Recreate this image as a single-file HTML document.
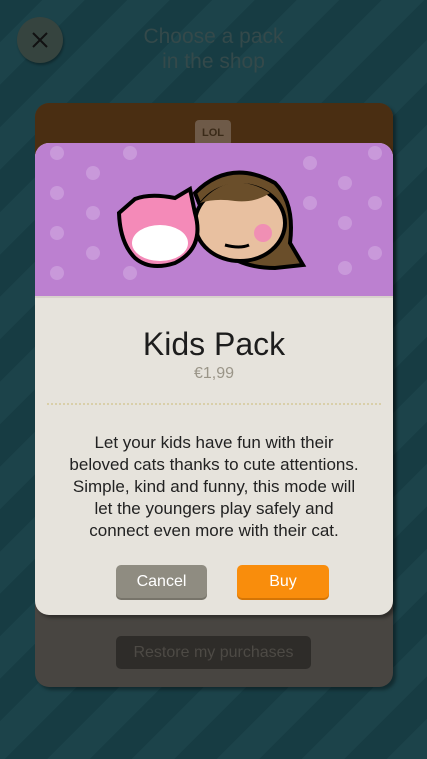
<!DOCTYPE html><html><head><style>
body{margin:0;width:427px;height:759px;overflow:hidden;font-family:"Liberation Sans",sans-serif;
background:repeating-linear-gradient(135deg,#173c43 0 30px,#1c434a 30px 60px);position:relative}
.close{position:absolute;left:17px;top:17px;width:46px;height:46px;border-radius:50%;background:#36443f;box-shadow:1px 2px 2px rgba(0,0,0,.3)}
.title{position:absolute;left:100px;width:227px;top:24px;text-align:center;color:#34494a;font-size:21px;line-height:25px}
.back{position:absolute;left:35px;top:103px;width:358px;height:584px;border-radius:14px;background:#484541;box-shadow:3px 3px 3px rgba(0,0,0,.35);overflow:hidden}
.back .top{height:60px;background:#4a2e12}
.restore{position:absolute;left:81px;top:533px;width:195px;height:33px;border-radius:5px;background:#2e2c29;color:#4d4a45;font-size:16px;text-align:center;line-height:33px}
.modal{position:absolute;left:35px;top:143px;width:358px;height:472px;border-radius:14px;background:#e6e3dc;overflow:hidden;box-shadow:3px 3px 3px rgba(0,0,0,.35)}
.hdr{height:153px;background:#bc80d0;border-bottom:2px solid #d8d2cc}
h1{margin:0;position:absolute;top:183px;width:100%;text-align:center;font-weight:normal;font-size:32px;color:#1d1d1d}
.price{position:absolute;top:222px;width:100%;text-align:center;color:#9a9588;font-size:16px}
.dots{position:absolute;top:260px;left:12px;right:12px;border-top:2px dotted #d9cfa9}
.p{position:absolute;top:289px;left:0;right:0;text-align:center;font-size:17px;line-height:22px;color:#222}
.btn{position:absolute;top:422px;height:33px;width:92px;border-radius:5px;color:#fff;font-size:16px;text-align:center;line-height:33px}
</style></head><body>
<div class="close"><svg width="46" height="46"><path d="M16 16L30 30M30 16L16 30" stroke="#111" stroke-width="2"/></svg></div>
<div class="title">Choose a pack<br>in the shop</div>
<div class="back"><div class="top"></div>
<div style="position:absolute;left:160px;top:17px;width:36px;height:26px;background:#6e5a48;border-radius:4px;color:#3a2a18;font-size:11px;font-weight:bold;text-align:center;line-height:26px">LOL</div>
<div class="restore">Restore my purchases</div></div>
<div class="modal"><div class="hdr">
<svg width="358" height="153">
<g fill="#c999da">
<circle cx="22" cy="10" r="7"/><circle cx="58" cy="30" r="7"/><circle cx="22" cy="50" r="7"/><circle cx="58" cy="70" r="7"/><circle cx="22" cy="90" r="7"/><circle cx="58" cy="110" r="7"/><circle cx="22" cy="130" r="7"/>
<circle cx="95" cy="10" r="7"/><circle cx="95" cy="130" r="7"/>
<circle cx="275" cy="20" r="7"/><circle cx="310" cy="40" r="7"/><circle cx="275" cy="60" r="7"/><circle cx="310" cy="80" r="7"/><circle cx="340" cy="10" r="7"/><circle cx="340" cy="60" r="7"/><circle cx="340" cy="110" r="7"/><circle cx="310" cy="125" r="7"/>
</g>
<path d="M160 50 Q195 15 240 40 Q260 60 255 100 L268 122 L240 125 Q200 125 180 100Z" fill="#6a4e2a" stroke="#000" stroke-width="4"/>
<ellipse cx="205" cy="80" rx="45" ry="38" fill="#e8c0a0" stroke="#000" stroke-width="4"/>
<path d="M165 60 Q195 25 235 50 Q220 60 200 58 Q180 55 165 60Z" fill="#6a4e2a"/>
<circle cx="228" cy="90" r="9" fill="#f08fb4"/>
<path d="M190 102 Q205 106 214 102" stroke="#000" stroke-width="3" fill="none"/>
<path d="M84 70 L100 56 Q115 50 140 55 L155 46 L160 70 Q170 105 140 120 Q115 128 100 115 Q85 100 84 70Z" fill="#f48ab8" stroke="#000" stroke-width="4"/>
<ellipse cx="125" cy="100" rx="28" ry="18" fill="#fff"/>
</svg></div>
<h1>Kids Pack</h1><div class="price">€1,99</div><div class="dots"></div>
<div class="p">Let your kids have fun with their<br>beloved cats thanks to cute attentions.<br>Simple, kind and funny, this mode will<br>let the youngers play safely and<br>connect even more with their cat.</div>
<div class="btn" style="left:81px;width:91px;background:#8f8c81;box-shadow:0 2px 0 #77746a">Cancel</div>
<div class="btn" style="left:202px;background:#f98d0c;box-shadow:0 2px 0 #d57505">Buy</div>
</div>
</body></html>
